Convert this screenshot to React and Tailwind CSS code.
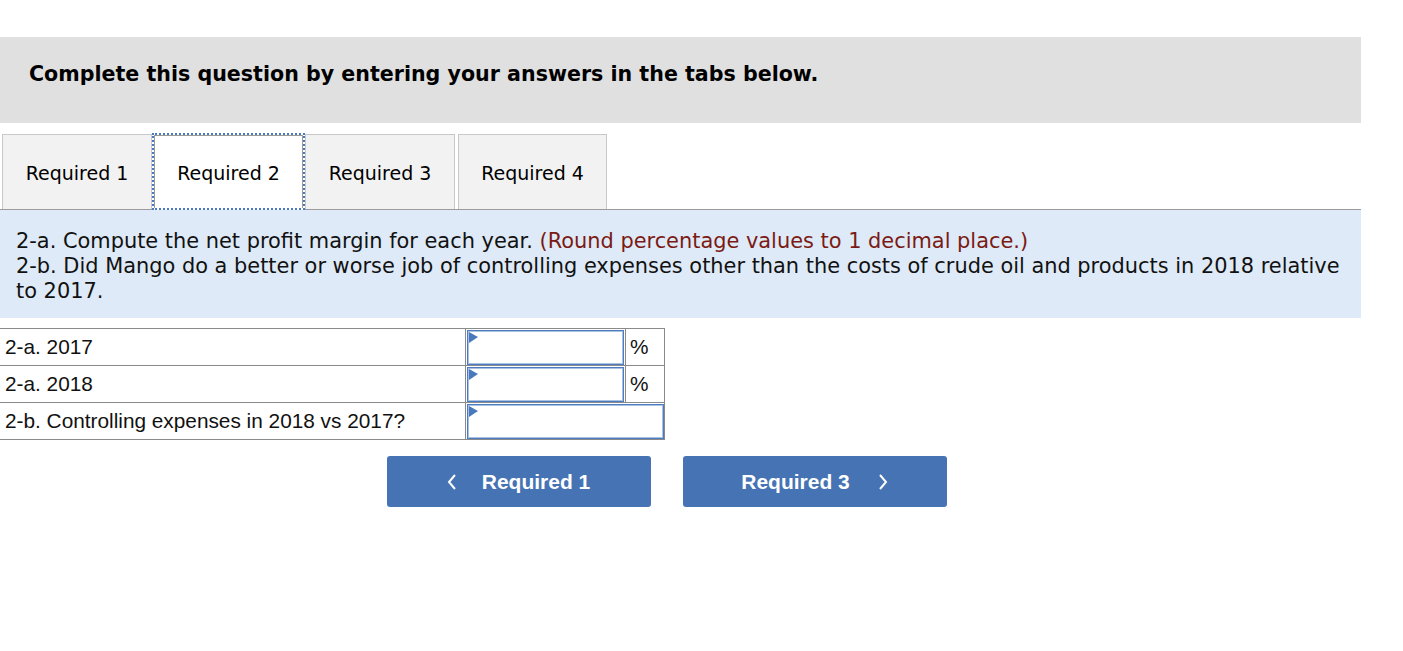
import React from "react";

const Tri = () => (
  <svg className="absolute left-[1px] top-[1px]" width="9" height="12" viewBox="0 0 9 12">
    <path d="M0 0 L9 5 L0 11 Z" fill="#4a78bd" />
  </svg>
);

function InputBox({ w }) {
  return (
    <div className={`relative h-[35px] ${w} border border-[#4d7cc0] shadow-[inset_0_0_0_1px_#a9c1e3] bg-white`}>
      <Tri />
    </div>
  );
}

export default function App() {
  return (
    <div className="w-[1403px] h-[651px] bg-white pt-[37px]">
      <div className="w-[1361px] h-[86px] bg-[#e0e0e0] flex items-center pl-[29px] pb-[11px]">
        <span className="text-[20.6px] font-bold text-black" style={{ fontFamily: '"DejaVu Sans", Verdana, sans-serif' }}>
          Complete this question by entering your answers in the tabs below.
        </span>
      </div>

      <div className="w-[1361px] mt-[11px] flex items-end pl-[2px] h-[76px] border-b border-[#9b9b9b]" style={{ fontFamily: '"DejaVu Sans", Tahoma, sans-serif' }}>
        <div className="w-[150px] h-[75px] pt-[3px] bg-[#f2f2f2] border border-b-0 border-[#c8c8c8] flex items-center justify-center text-[19px] text-black">
          Required 1
        </div>
        <div className="relative w-[153px] h-[77px] pt-[3px] -mb-[1px] bg-white border-[2px] border-dotted border-[#4a78c4] flex items-center justify-center text-[19px] text-black z-10">
          <div className="absolute inset-0 border border-b-0 border-[#9a9a9a] pointer-events-none" />
          Required 2
        </div>
        <div className="w-[150px] h-[75px] pt-[3px] bg-[#f2f2f2] border border-b-0 border-[#c8c8c8] flex items-center justify-center text-[19px] text-black">
          Required 3
        </div>
        <div className="ml-[3px] w-[149px] h-[75px] pt-[3px] bg-[#f2f2f2] border border-b-0 border-[#c8c8c8] flex items-center justify-center text-[19px] text-black">
          Required 4
        </div>
      </div>

      <div className="w-[1361px] h-[108px] bg-[#deeaf7] pl-[16px] pt-[19px] text-[20.9px] leading-[25px] text-[#111] whitespace-nowrap" style={{ fontFamily: '"DejaVu Sans", Verdana, sans-serif' }}>
        2-a. Compute the net profit margin for each year.{" "}
        <span className="text-[#7b1a14]">(Round percentage values to 1 decimal place.)</span>
        <br />
        2-b. Did Mango do a better or worse job of controlling expenses other than the costs of crude oil and products in 2018 relative
        <br />
        to 2017.
      </div>

      <div className="mt-[10px] w-[665px] text-[20.8px] text-[#111]" style={{ fontFamily: '"Liberation Sans", Arial, sans-serif' }}>
        <div className="flex h-[37px] border-t border-[#8a8a8a]">
          <div className="w-[465px] pl-[5px] flex items-center">2-a. 2017</div>
          <div className="w-[160px] border-l border-[#8a8a8a] pl-[1px] pt-[1px]">
            <InputBox w="w-[157px]" />
          </div>
          <div className="w-[40px] border-l border-r border-[#8a8a8a] flex items-center pl-[4px]">%</div>
        </div>
        <div className="flex h-[37px] border-t border-[#8a8a8a]">
          <div className="w-[465px] pl-[5px] flex items-center">2-a. 2018</div>
          <div className="w-[160px] border-l border-[#8a8a8a] pl-[1px] pt-[1px]">
            <InputBox w="w-[157px]" />
          </div>
          <div className="w-[40px] border-l border-r border-[#8a8a8a] flex items-center pl-[4px]">%</div>
        </div>
        <div className="flex h-[38px] border-t border-b border-[#8a8a8a]">
          <div className="w-[465px] pl-[5px] flex items-center">2-b. Controlling expenses in 2018 vs 2017?</div>
          <div className="w-[200px] border-l border-r border-[#8a8a8a] pl-[1px] pt-[1px]">
            <InputBox w="w-[197px]" />
          </div>
        </div>
      </div>

      <div className="mt-[16px] flex gap-[32px] pl-[387px]" style={{ fontFamily: '"Liberation Sans", Arial, sans-serif' }}>
        <div className="w-[264px] h-[51px] rounded-[3px] bg-[#4673b3] flex items-center justify-center text-white text-[21px] font-bold">
          <svg width="12" height="18" viewBox="0 0 12 18" className="mr-[24px] ml-[-2px]">
            <path d="M9 2 L3 9 L9 16" fill="none" stroke="white" strokeWidth="2" />
          </svg>
          Required 1
        </div>
        <div className="w-[264px] h-[51px] rounded-[3px] bg-[#4673b3] flex items-center justify-center text-white text-[21px] font-bold">
          Required 3
          <svg width="12" height="18" viewBox="0 0 12 18" className="ml-[27px]">
            <path d="M3 2 L9 9 L3 16" fill="none" stroke="white" strokeWidth="2" />
          </svg>
        </div>
      </div>
    </div>
  );
}
